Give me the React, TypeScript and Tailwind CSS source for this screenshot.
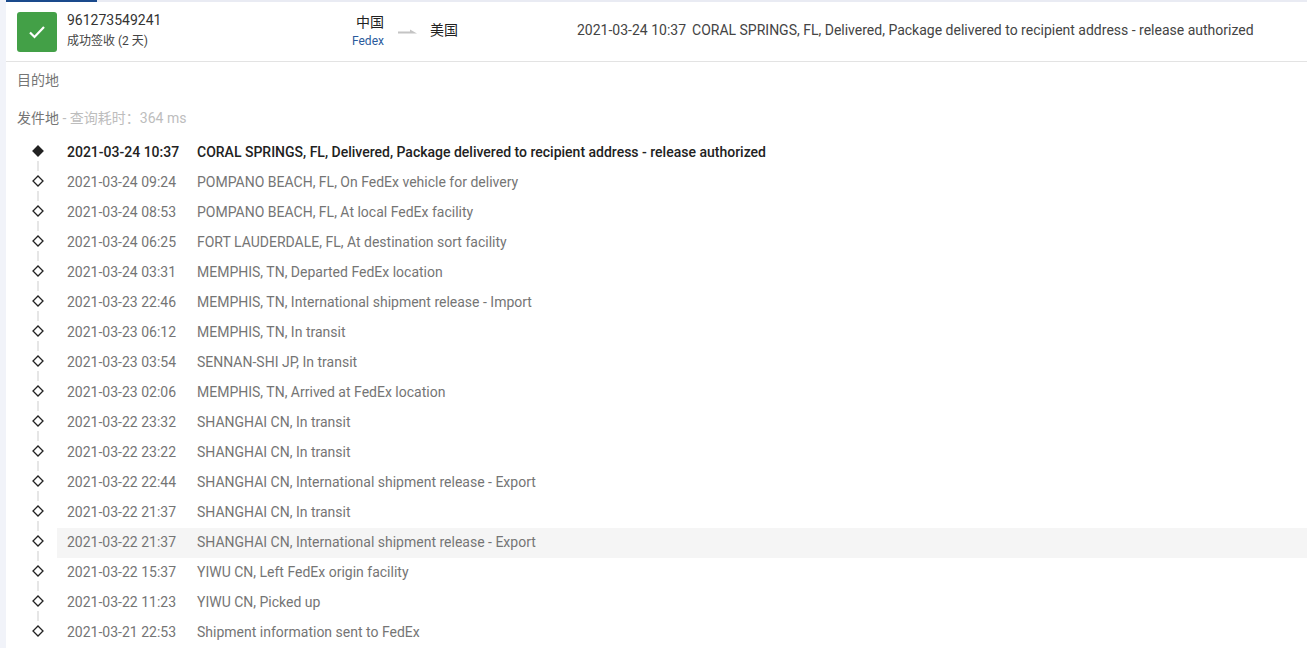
const events = [
  ["2021-03-24 10:37", "CORAL SPRINGS, FL, Delivered, Package delivered to recipient address - release authorized"],
  ["2021-03-24 09:24", "POMPANO BEACH, FL, On FedEx vehicle for delivery"],
  ["2021-03-24 08:53", "POMPANO BEACH, FL, At local FedEx facility"],
  ["2021-03-24 06:25", "FORT LAUDERDALE, FL, At destination sort facility"],
  ["2021-03-24 03:31", "MEMPHIS, TN, Departed FedEx location"],
  ["2021-03-23 22:46", "MEMPHIS, TN, International shipment release - Import"],
  ["2021-03-23 06:12", "MEMPHIS, TN, In transit"],
  ["2021-03-23 03:54", "SENNAN-SHI JP, In transit"],
  ["2021-03-23 02:06", "MEMPHIS, TN, Arrived at FedEx location"],
  ["2021-03-22 23:32", "SHANGHAI CN, In transit"],
  ["2021-03-22 23:22", "SHANGHAI CN, In transit"],
  ["2021-03-22 22:44", "SHANGHAI CN, International shipment release - Export"],
  ["2021-03-22 21:37", "SHANGHAI CN, In transit"],
  ["2021-03-22 21:37", "SHANGHAI CN, International shipment release - Export"],
  ["2021-03-22 15:37", "YIWU CN, Left FedEx origin facility"],
  ["2021-03-22 11:23", "YIWU CN, Picked up"],
  ["2021-03-21 22:53", "Shipment information sent to FedEx"],
];

const Marker = ({ filled }: { filled: boolean }) => (
  <svg width="12" height="12" viewBox="0 0 12 12" className="shrink-0">
    <path
      d="M6 1 L11 6 L6 11 L1 6 Z"
      fill={filled ? "#222222" : "#ffffff"}
      stroke="#222222"
      strokeWidth="1.3"
    />
  </svg>
);

export default function App() {
  return (
    <div className="flex h-[648px] overflow-hidden bg-white font-['Roboto','Noto_Sans_CJK_SC',sans-serif] text-[14px] text-[#757575]">
      <div className="w-[6px] shrink-0 bg-[#f1f3f9]" />
      <div className="min-w-0 flex-1">
        <div className="h-[2px] bg-[#e9ebf3]">
          <div className="h-[2px] w-[91px] bg-[#1a4a8c]" />
        </div>
        <div className="flex h-[60px] items-center border-b border-[#e3e3e3] pl-[11px]">
          <div className="flex h-[40px] w-[40px] shrink-0 items-center justify-center rounded-[3px] bg-[#43a047]">
            <svg width="16" height="16" viewBox="0 0 16 16" fill="none">
              <path d="M1 8.5 L5.5 13 L15 3" stroke="#ffffff" strokeWidth="2.2" />
            </svg>
          </div>
          <div className="ml-[10px] w-[270px] shrink-0">
            <div className="mt-[-3px] text-[14px] leading-[20px] text-[#333333]">961273549241</div>
            <div className="pt-[1px] text-[12px] leading-[20px] text-[#444444]">成功签收 (2 天)</div>
          </div>
          <div className="flex w-[72px] shrink-0 flex-col items-start pl-[15px]">
            <div className="mt-[-2px] pl-[4px] text-[14px] leading-[21px] text-[#222222]">中国</div>
            <div className="text-[12px] leading-[16px] text-[#2a5a9c]">Fedex</div>
          </div>
          <svg width="20" height="6" viewBox="0 0 20 6" className="mb-[-1px] ml-[-11px] mr-[12px] shrink-0">
            <path d="M0 2.5 H12 V0.5 L19 4.5 H0 Z" fill="#c4c4c4" />
          </svg>
          <div className="mb-[2px] w-[147px] shrink-0 text-[14px] text-[#222222]">美国</div>
          <div className="mb-[2px] whitespace-nowrap text-[14px] text-[#444444]">
            2021-03-24 10:37
            <span className="ml-[6px]">CORAL SPRINGS, FL, Delivered, Package delivered to recipient address - release authorized</span>
          </div>
        </div>
        <div className="pl-[11px] pt-[8px] text-[14px] leading-[20px]">目的地</div>
        <div className="pl-[11px] pt-[18px] text-[14px] leading-[20px]">
          发件地<span className="text-[#bdbdbd]"> - 查询耗时：364 ms</span>
        </div>
        <div className="mt-[10px]">
          {events.map(([time, text], i) => (
            <div key={i} className="flex h-[30px]">
              <div className="flex w-[51px] shrink-0 flex-col items-center pl-[13px]">
                <div className="mt-[7px]">
                  <Marker filled={i === 0} />
                </div>
                {i < events.length - 1 && <div className="mt-[4px] h-[10px] w-[2px] shrink-0 bg-[#e6e6e6]" />}
              </div>
              <div
                className={`flex flex-1 items-center pb-[2px] pl-[10px] ${i === 13 ? "bg-[#f5f5f5]" : ""} ${i === 0 ? "font-medium text-[#222222]" : ""}`}
              >
                <span className="w-[130px] shrink-0">{time}</span>
                <span className="whitespace-nowrap">{text}</span>
              </div>
            </div>
          ))}
        </div>
      </div>
    </div>
  );
}
